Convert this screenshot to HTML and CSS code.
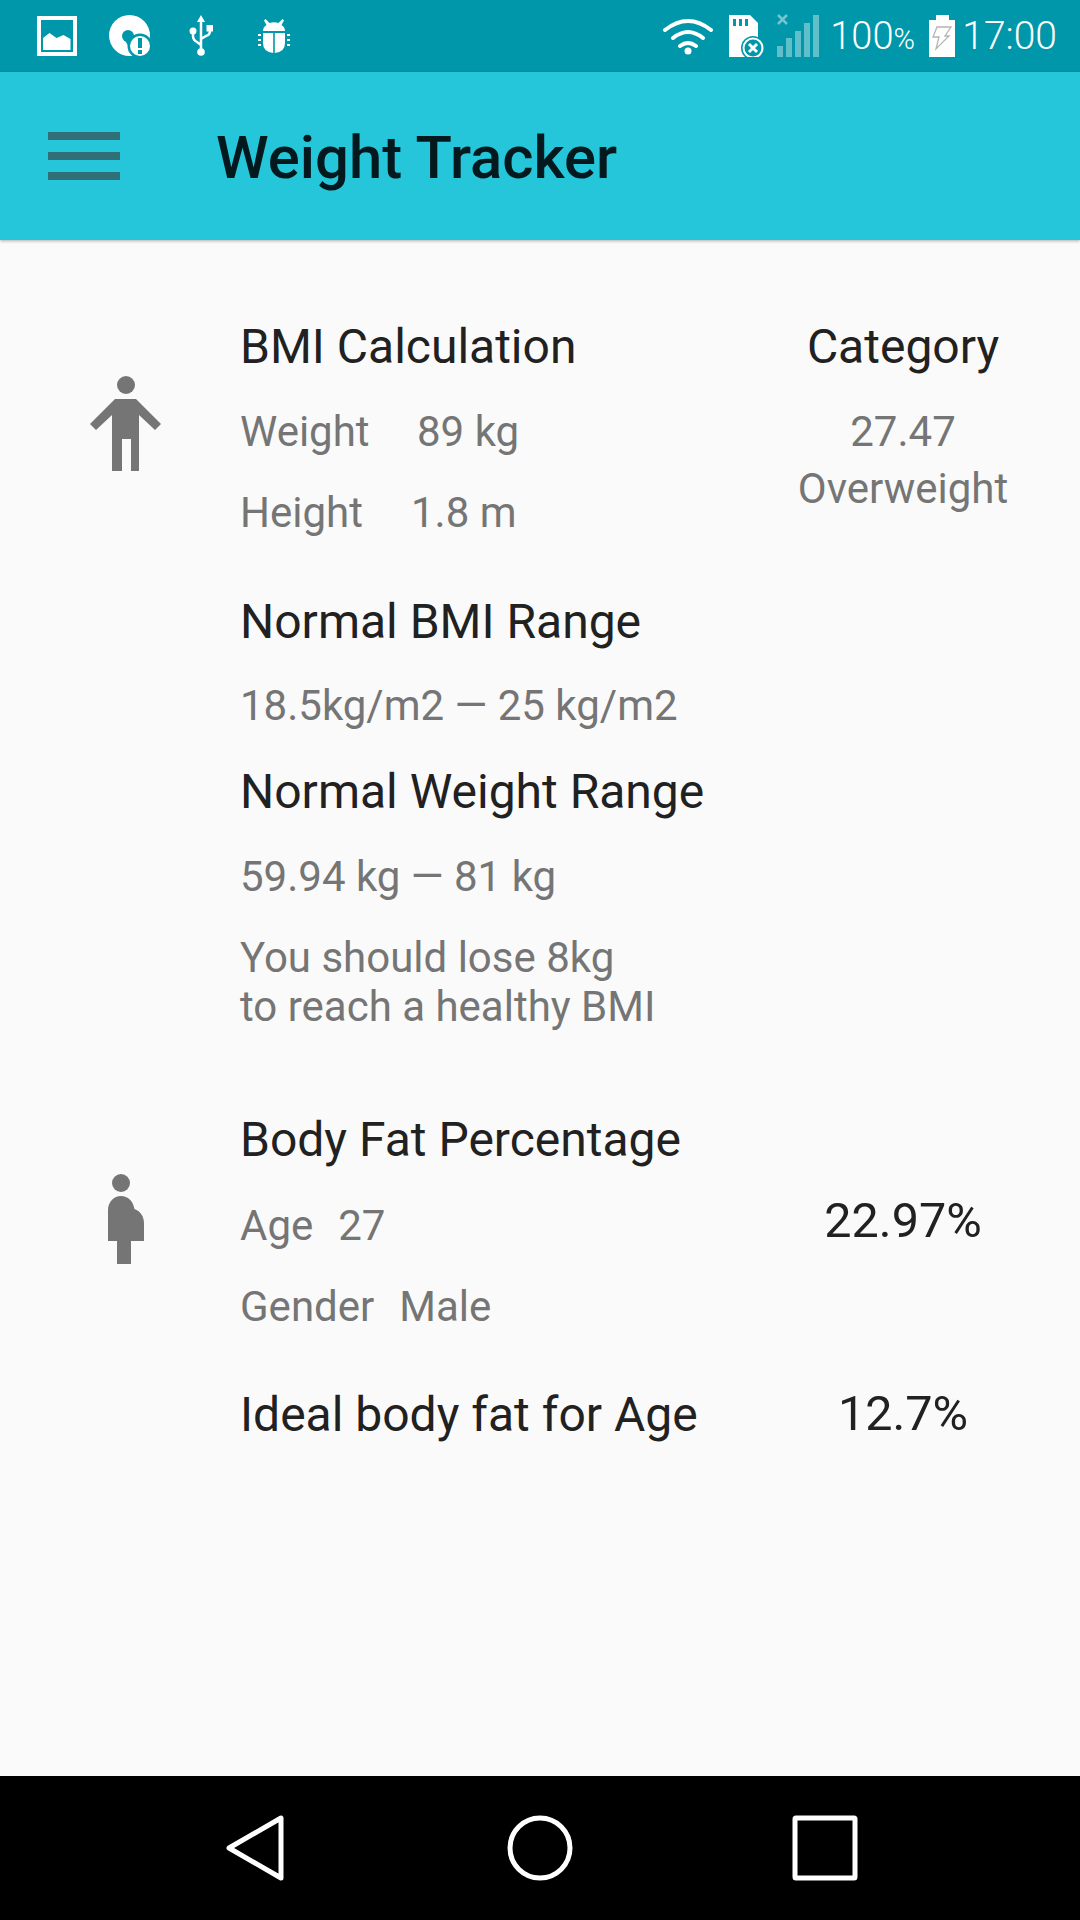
FILE: index.html
```html
<!DOCTYPE html>
<html lang="en">
<head>
<meta charset="utf-8">
<title>Weight Tracker</title>
<link rel="stylesheet" href="styles.css">
</head>
<body>
<div class="screen">
  <header class="status">
    <div class="status-left">
      <svg class="s-img" width="40" height="40" viewBox="0 0 40 40"><path fill="#fff" fill-rule="evenodd" d="M0 0h40v40H0zM4 4v32h32V4z"/><path fill="#fff" d="M6 34V22l6.500-5 7 5 7-3 7 4V34z"/></svg>
      <svg class="s-blob" width="42" height="42" viewBox="0 0 42 42"><circle cx="20.500" cy="20.500" r="20.500" fill="#fff"/><circle cx="19" cy="21" r="6" fill="#0097ab"/><circle cx="31" cy="31" r="12.500" fill="#0097ab"/><path fill="#0097ab" d="M15 24h8v8l-3 0z"/><circle cx="31" cy="31" r="10" fill="#fff"/><rect x="29" y="23" width="4" height="10" fill="#0097ab"/><rect x="29" y="35" width="4" height="4" fill="#0097ab"/></svg>
      <svg class="s-usb" width="24" height="42" viewBox="0 0 24 42"><g fill="none" stroke="#fff" stroke-width="2.500"><path d="M12 6v30M4 16v5q0 4 4 6l4 3M21 12v4q0 4-4 5l-5 3"/></g><path fill="#fff" d="M12 0l4 7H8z"/><circle cx="4" cy="16" r="3.500" fill="#fff"/><rect x="17.500" y="10" width="6.500" height="6.500" fill="#fff"/><circle cx="12" cy="37" r="3.800" fill="#fff"/></svg>
      <svg class="s-bug" width="32" height="34" viewBox="0 0 32 34"><path fill="#fff" d="M5 12q0-4 3.500-6L6 1.500 7.500 0l4 4q4.500-1.600 9 0l4-4L26 1.500 23.500 6Q27 8 27 12zM5 14h10.200V34Q5 33 5 24zM16.800 14H27V24q0 9-10.200 10z"/><path stroke="#fff" stroke-width="2" stroke-dasharray="3 2" fill="none" d="M0 16h3M0 21h3M0 26h3M29 16h3M29 21h3M29 26h3"/></svg>
    </div>
    <div class="status-right">
      <svg class="wifi" width="50" height="38" viewBox="0 0 50 38"><g fill="none" stroke="#fff" stroke-width="4" stroke-linecap="round"><path d="M2 13Q25-5 48 13M10 21Q25 9 40 21M17 29q8-6 16 0"/></g><circle cx="25" cy="34" r="3.500" fill="#fff"/></svg>
      <svg class="sd" width="36" height="42" viewBox="0 0 36 42"><path fill="#fff" d="M0 0h21l8 8v34H0z"/><path fill="#0097ab" d="M4 4h3v7H4zM10 4h3v7h-3zM16 4h3v7h-3z"/><circle cx="24" cy="33" r="12" fill="#0097ab"/><circle cx="24" cy="33" r="9.500" fill="none" stroke="#fff" stroke-width="2"/><path stroke="#fff" stroke-width="3" d="M20 29l8 8M28 29l-8 8"/></svg>
      <svg class="sig" width="42" height="44" viewBox="0 0 42 44"><g fill="#fff" opacity=".38"><path d="M0 33h6v11H0zM9 25h6v19H9zM18 18h6v26h-6zM27 10h6v34h-6zM36 2h6v42h-6z"/></g><path stroke="#fff" stroke-width="2.500" opacity=".45" d="M1 2l9 9M10 2l-9 9"/></svg>
      <span class="pct">100<span class="pct-sign">%</span></span>
      <svg class="batt" width="26" height="42" viewBox="0 0 26 42"><path fill="#fff" d="M7 0h13v5h6v37H0V5h7z"/><path fill="none" stroke="#b4b4b4" stroke-width="1.300" d="M8 12h14l-6 9h4L7 34l3-12H4z"/></svg>
      <span class="clock">17:00</span>
    </div>
  </header>

  <div class="appbar">
    <button class="menu" aria-label="Menu"><span></span><span></span><span></span></button>
    <h1>Weight Tracker</h1>
  </div>

  <main class="content">
    <section class="row bmi">
      <div class="icon-col">
        <svg class="man" width="72" height="96" viewBox="0 0 72 96"><circle cx="36" cy="9" r="9" fill="#757575"/><path fill="#757575" d="M25 23H46L71 48 65 54 49 39V95H41V63H32V95H22V39L6 54 0 48Z"/></svg>
      </div>
      <div class="main-col">
        <h2>BMI Calculation</h2>
        <p class="sub w1"><span class="lbl">Weight</span><span>89 kg</span></p>
        <p class="sub h1a"><span class="lbl">Height</span><span>1.8 m</span></p>
        <h2 class="nbr">Normal BMI Range</h2>
        <p class="sub r1">18.5kg/m2 — 25 kg/m2</p>
        <h2 class="nwr">Normal Weight Range</h2>
        <p class="sub r2">59.94 kg — 81 kg</p>
        <p class="sub note">You should lose 8kg<br>to reach a healthy BMI</p>
      </div>
      <div class="side-col">
        <h2>Category</h2>
        <p class="sub w1">27.47</p>
        <p class="sub over">Overweight</p>
      </div>
    </section>

    <section class="row fat">
      <div class="icon-col">
        <svg class="preg" width="36" height="90" viewBox="0 0 36 90"><circle cx="13" cy="9" r="9" fill="#757575"/><path fill="#757575" d="M0 67V36C0 28 6 22 13 22 20 22 25 27 26.500 35 32 37 36 42 36 49V67H23V90H9V67Z"/></svg>
      </div>
      <div class="main-col">
        <h2>Body Fat Percentage</h2>
        <p class="sub age"><span class="lbl2">Age</span><span>27</span></p>
        <p class="sub h1a"><span class="lbl2">Gender</span><span>Male</span></p>
        <h2 class="ideal">Ideal body fat for Age</h2>
      </div>
      <div class="side-col fat-side">
        <p class="val">22.97%</p>
        <p class="val v2">12.7%</p>
      </div>
    </section>
  </main>

  <footer class="nav">
    <svg width="58" height="66" viewBox="0 0 58 66"><path fill="none" stroke="#fff" stroke-width="5" stroke-linejoin="round" d="M55 3v60L3 33z"/></svg>
    <svg width="66" height="66" viewBox="0 0 66 66"><circle cx="33" cy="33" r="30" fill="none" stroke="#fff" stroke-width="5"/></svg>
    <svg width="66" height="66" viewBox="0 0 66 66"><rect x="3" y="3" width="60" height="60" rx="1" fill="none" stroke="#fff" stroke-width="5"/></svg>
  </footer>
</div>
</body>
</html>
```
FILE: styles.css
```css
* { box-sizing: border-box; }
html, body { margin: 0; padding: 0; }
body { width: 1080px; height: 1920px; overflow: hidden; font-family: Roboto, sans-serif; }
p, h1, h2 { margin: 0; font-weight: 400; }

.screen { width: 1080px; height: 1920px; display: flex; flex-direction: column; background: #fafafa; }

.status { height: 72px; flex: none; background: #0097ab; display: flex; justify-content: space-between; align-items: center; color: #fff; padding: 0 23px 0 37px; }
.status-left { display: flex; align-items: center; }
.s-img { margin-right: 32px; }
.s-blob { margin-right: 38px; }
.s-usb { margin-right: 45px; }
.status-right { display: flex; align-items: center; }
.wifi { margin-right: 16px; }
.sd { margin-right: 12px; }
.sig { margin-right: 11px; margin-top: -2px; }
.pct { font-size: 38px; font-weight: 300; width: 83px; margin-right: 16px; white-space: nowrap; }
.pct-sign { font-size: 29px; }
.batt { margin-right: 7px; }
.clock { font-size: 39px; font-weight: 300; }

.appbar { height: 168px; flex: none; background: #26c6da; display: flex; align-items: center; box-shadow: 0 1px 3px rgba(0,0,0,.3); position: relative; padding-left: 48px; }
.menu { width: 72px; height: 48px; padding: 0; background: none; border: 0; display: flex; flex-direction: column; justify-content: space-between; margin-right: 96px; }
.menu span { display: block; height: 8px; background: #316f78; }
h1 { font-size: 59.800px; font-weight: 500; color: #04191e; padding-top: 4px; }

.content { flex: 1; display: flex; flex-direction: column; }
.row { display: flex; }
.bmi { padding-top: 80px; }
.fat { padding-top: 82px; }
.icon-col { width: 240px; flex: none; display: flex; justify-content: center; padding-left: 12px; }
.man { margin-top: 56px; }
.preg { margin-top: 61px; }
.main-col { width: 553px; flex: none; }
.side-col { width: 220px; flex: none; text-align: center; }

h2 { font-size: 48px; line-height: 54px; color: #212121; }
.sub { font-size: 42px; line-height: 48px; color: #757575; }
.w1 { margin-top: 34px; }
.age { margin-top: 35px; }
.h1a { margin-top: 33px; }
.lbl { display: inline-block; width: 177px; }
.h1a .lbl { width: 171px; }
.lbl2 { margin-right: 25px; }
.nbr { margin-top: 58px; }
.r1 { margin-top: 33px; }
.nwr { margin-top: 35px; }
.r2 { margin-top: 34px; }
.note { margin-top: 32px; line-height: 49px; }
.over { margin-top: 9px; }
.ideal { margin-top: 57px; }
.val { font-size: 48.500px; line-height: 56px; color: #212121; }
.fat-side { padding-top: 80px; }
.v2 { margin-top: 137px; }

.nav { height: 144px; flex: none; background: #000; display: grid; grid-template-columns: repeat(3, 285px); align-items: center; justify-items: center; padding-left: 112px; }
```
